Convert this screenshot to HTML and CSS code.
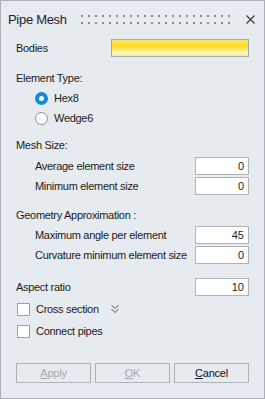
FILE: index.html
```html
<!DOCTYPE html>
<html lang="en">

<head>
    <meta charset="UTF-8">
    <title>Pipe Mesh</title>
    <link rel="stylesheet" href="styles.css">
</head>

<body>
    <div class="dialog">
        <header class="titlebar">
            <span class="title">Pipe Mesh</span>
            <span class="grip"></span>
            <svg class="close" width="9" height="9" viewBox="0 0 9 9">
                <path d="M0.5 0.5 L8.5 8.5 M8.5 0.5 L0.5 8.5" stroke="#3a3a3a" stroke-width="1.1" fill="none" />
            </svg>
        </header>

        <main class="content">
            <div class="row bodies-row">
                <span class="label">Bodies</span>
                <div class="selector"></div>
            </div>

            <div class="row section" id="elementType">Element Type:</div>
            <label class="row sub">
                <span class="radio checked"></span>Hex8
            </label>
            <label class="row sub">
                <span class="radio"></span>Wedge6
            </label>

            <div class="row section" id="meshSize">Mesh Size:</div>
            <div class="row sub field first">
                <span class="label">Average element size</span>
                <input type="text" value="0">
            </div>
            <div class="row sub field">
                <span class="label">Minimum element size</span>
                <input type="text" value="0">
            </div>

            <div class="row section" id="geometry">Geometry Approximation :</div>
            <div class="row sub field">
                <span class="label">Maximum angle per element</span>
                <input type="text" value="45">
            </div>
            <div class="row sub field">
                <span class="label">Curvature minimum element size</span>
                <input type="text" value="0">
            </div>

            <div class="row field" id="aspect">
                <span class="label">Aspect ratio</span>
                <input type="text" value="10">
            </div>

            <label class="row check" id="crossSection">
                <span class="box"></span>Cross section
                <svg class="chevron" width="8" height="10" viewBox="0 0 8 10">
                    <path d="M0.5 1 L4 4.5 L7.5 1 M0.5 5 L4 8.5 L7.5 5" stroke="#555" stroke-width="1" fill="none" />
                </svg>
            </label>
            <label class="row check" id="connectPipes">
                <span class="box"></span>Connect pipes
            </label>
        </main>

        <footer class="buttons">
            <button type="button" class="btn" disabled><u>A</u>pply</button>
            <button type="button" class="btn" disabled><u>O</u>K</button>
            <button type="button" class="btn"><u>C</u>ancel</button>
        </footer>
    </div>
</body>

</html>
```

FILE: styles.css
```css
* {
    box-sizing: border-box;
}

body {
    margin: 0;
    background-color: #e6ebef;
    font-family: "Liberation Sans", Arial, sans-serif;
    font-size: 11px;
    letter-spacing: -0.3px;
    color: #1b1b1b;
}

.dialog {
    width: 265px;
    height: 399px;
    border: 1px solid #a9b0b6;
    background-color: #e6ebef;
    display: flex;
    flex-direction: column;
}

.titlebar {
    height: 36px;
    display: flex;
    align-items: center;
    padding: 0 9px 0 7px;
}

.title {
    font-size: 13px;
    letter-spacing: -0.3px;
    color: #231d2a;
}

.grip {
    margin-left: auto;
    width: 151px;
    height: 9px;
    background-image: linear-gradient(to right, #8a8a8a 2px, transparent 2px), linear-gradient(to right, #8a8a8a 2px, transparent 2px);
    background-size: 7px 2px;
    background-repeat: repeat-x;
    background-position: 0 0, 0 7px;
}

.close {
    margin-left: 14px;
    display: block;
}

.content {
    padding: 0 15px;
    display: flex;
    flex-direction: column;
}

.row {
    height: 20px;
    display: flex;
    align-items: center;
}

.bodies-row {
    height: 18px;
    margin-top: 2px;
}

.selector {
    margin-left: auto;
    width: 138px;
    height: 18px;
    border: 1px solid #a4a9ae;
    background: linear-gradient(#fde772, #ffdb1f 35%, #ffe65c 55%, #fff6cf 82%, #ffe66a);
}

.sub {
    padding-left: 19px;
}

#elementType {
    margin-top: 11px;
}

#meshSize {
    margin-top: 7px;
}

#geometry {
    margin-top: 9px;
}

#aspect {
    margin-top: 12px;
}

.field.first {
    margin-top: 1px;
}

.field input {
    margin-left: auto;
    width: 54px;
    height: 18px;
    border: 1px solid #adb4ba;
    background: #fff;
    font-family: inherit;
    font-size: 11px;
    color: #1b1b1b;
    text-align: right;
    padding: 0 4px;
}

.radio {
    width: 13px;
    height: 13px;
    border-radius: 50%;
    border: 1px solid #8c8c8c;
    background: #fff;
    margin-right: 6px;
}

.radio.checked {
    border: 4px solid #0f8ddb;
}

.check {
    margin-top: 2px;
}

.box {
    width: 13px;
    height: 13px;
    border: 1px solid #9aa1a7;
    background: #fff;
    margin: 0 6px 0 1px;
}

.chevron {
    margin-left: 12px;
    display: block;
}

.buttons {
    display: flex;
    gap: 4px;
    padding: 0 15px;
    margin-top: 22px;
}

.btn {
    flex: 1;
    height: 20px;
    border: 1px solid #aeb3b8;
    background: #e6ebef;
    font-family: inherit;
    font-size: 11px;
    letter-spacing: -0.2px;
    color: #111;
    padding: 0;
}

.btn:disabled {
    color: #a7a9ab;
}
```
